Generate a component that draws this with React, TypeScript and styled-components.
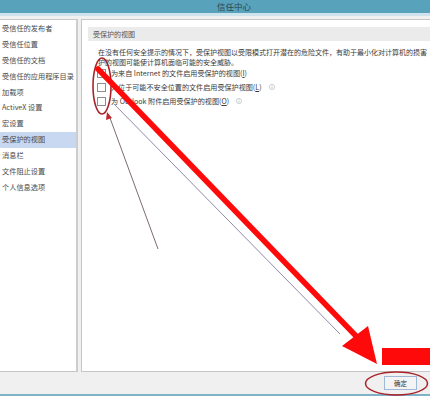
import React from "react";
import styled, { createGlobalStyle } from "styled-components";

const Global = createGlobalStyle`
  html, body { margin: 0; padding: 0; background: #f0f0f0; }
  body { font-family: "Noto Sans CJK SC", "Noto Sans", sans-serif; }
`;

const Window = styled.div`
  position: relative;
  width: 430px;
  height: 396px;
  overflow: hidden;
  display: flex;
  flex-direction: column;
  background: #f0f0f0;
  color: #3c3c3c;
`;

const TitleBar = styled.div`
  height: 13px;
  flex: none;
  background: #58a2bb;
  color: #2f4550;
  font-size: 8.5px;
  line-height: 13px;
  text-align: center;
  padding-left: 38px;
`;

const TitleEdge = styled.div`
  height: 3px;
  flex: none;
  background: #cfe3ec;
`;

const Body = styled.div`
  flex: 1;
  display: flex;
  gap: 3px;
  padding-top: 3px;
  min-height: 0;
`;

const NavPanel = styled.div`
  width: 78px;
  flex: none;
  background: #fff;
  border: 1px solid #c6c6c6;
  border-left: none;
  border-right: 2px solid #cdcdcd;
  padding-top: 1px;
  box-sizing: border-box;
`;

const NavItem = styled.div<{ $active?: boolean }>`
  height: 15.9px;
  line-height: 15.9px;
  padding-left: 2px;
  font-size: 7.2px;
  white-space: nowrap;
  color: #4a4a4a;
  background: ${(p) => (p.$active ? "#c9d8f1" : "transparent")};
`;

const MainPanel = styled.div`
  flex: 1;
  background: #fff;
  border: 1px solid #c6c6c6;
  border-right: none;
  padding: 7px 0 0 6px;
  overflow: hidden;
  min-width: 0;
`;

const SectionHeader = styled.div`
  height: 14px;
  line-height: 14px;
  background: #ebebeb;
  padding-left: 5px;
  font-size: 7px;
  color: #555;
`;

const Intro = styled.div`
  padding: 6px 0 0 10px;
  font-size: 7px;
  line-height: 10px;
  white-space: nowrap;
  color: #3a3a3a;
`;

const OptionList = styled.div`
  margin-top: -1px;
  padding-left: 9px;
  display: flex;
  flex-direction: column;
`;

const OptionRow = styled.label`
  height: 14px;
  display: flex;
  align-items: center;
  gap: 5px;
  font-size: 7.1px;
  white-space: nowrap;
  color: #3a3a3a;
`;

const Box = styled.span`
  width: 7px;
  height: 7px;
  flex: none;
  border: 1px solid #8c8c8c;
  background: #fff;
`;

const Info = styled.svg`
  width: 6px;
  height: 6px;
  margin-left: 2px;
  flex: none;
`;

const Footer = styled.div`
  height: 22px;
  flex: none;
  display: flex;
  justify-content: flex-end;
  align-items: flex-start;
  padding: 4px 13px 0 0;
  box-sizing: border-box;
`;

const OkButton = styled.div`
  width: 33px;
  height: 14px;
  box-sizing: border-box;
  border: 1px solid #9fb9d4;
  background: #f4f4f4;
  font-size: 6.5px;
  line-height: 12px;
  text-align: center;
  color: #333;
`;

const BottomEdge = styled.div`
  height: 2px;
  flex: none;
  background: #7fb2c6;
`;

const Overlay = styled.svg`
  position: absolute;
  left: 0;
  top: 0;
  width: 430px;
  height: 396px;
  pointer-events: none;
`;

const navItems = [
  "受信任的发布者",
  "受信任位置",
  "受信任的文档",
  "受信任的应用程序目录",
  "加载项",
  "ActiveX 设置",
  "宏设置",
  "受保护的视图",
  "消息栏",
  "文件阻止设置",
  "个人信息选项",
];

const InfoIcon = () => (
  <Info viewBox="0 0 12 12">
    <circle cx="6" cy="6" r="5.2" fill="none" stroke="#a9b3bb" strokeWidth="1.2" />
    <rect x="5.3" y="5" width="1.4" height="4" fill="#a9b3bb" />
    <rect x="5.3" y="2.8" width="1.4" height="1.3" fill="#a9b3bb" />
  </Info>
);

export default function App() {
  return (
    <>
      <Global />
      <Window>
        <TitleBar>信任中心</TitleBar>
        <TitleEdge />
        <Body>
          <NavPanel>
            {navItems.map((t) => (
              <NavItem key={t} $active={t === "受保护的视图"}>
                {t}
              </NavItem>
            ))}
          </NavPanel>
          <MainPanel>
            <SectionHeader>受保护的视图</SectionHeader>
            <Intro>
              <div>在没有任何安全提示的情况下，受保护视图以受限模式打开潜在的危险文件，有助于最小化对计算机的损害</div>
              <div>护的视图可能使计算机面临可能的安全威胁。</div>
            </Intro>
            <OptionList>
              <OptionRow>
                <Box />
                <span>
                  为来自 Internet 的文件启用受保护的视图(<u>I</u>)
                </span>
              </OptionRow>
              <OptionRow>
                <Box />
                <span>
                  为位于可能不安全位置的文件启用受保护视图(<u>L</u>)
                </span>
                <InfoIcon />
              </OptionRow>
              <OptionRow>
                <Box />
                <span>
                  为 Outlook 附件启用受保护的视图(<u>O</u>)
                </span>
                <InfoIcon />
              </OptionRow>
            </OptionList>
          </MainPanel>
        </Body>
        <Footer>
          <OkButton>确定</OkButton>
        </Footer>
        <BottomEdge />

        <Overlay viewBox="0 0 430 396">
          <line x1="114" y1="104" x2="340" y2="334" stroke="#9189aa" strokeWidth="1" />
          <line x1="158" y1="249" x2="110" y2="118" stroke="#7d6c6c" strokeWidth="1" />
          <polygon points="107,112 106,120 112,118" fill="#c0262b" />
          <ellipse cx="102" cy="86" rx="9" ry="28" fill="none" stroke="#a8232a" strokeWidth="1.6" />
          <line x1="98" y1="69" x2="356" y2="336" stroke="#ff0a0a" strokeWidth="5.5" strokeLinecap="round" />
          <polygon points="342,346 368,326 377,364" fill="#ff0a0a" />
          <rect x="382" y="348" width="48" height="17" fill="#ff0a0a" />
          <ellipse cx="396.5" cy="383.5" rx="31" ry="11.5" fill="none" stroke="#a8232a" strokeWidth="1.5" />
        </Overlay>
      </Window>
    </>
  );
}
